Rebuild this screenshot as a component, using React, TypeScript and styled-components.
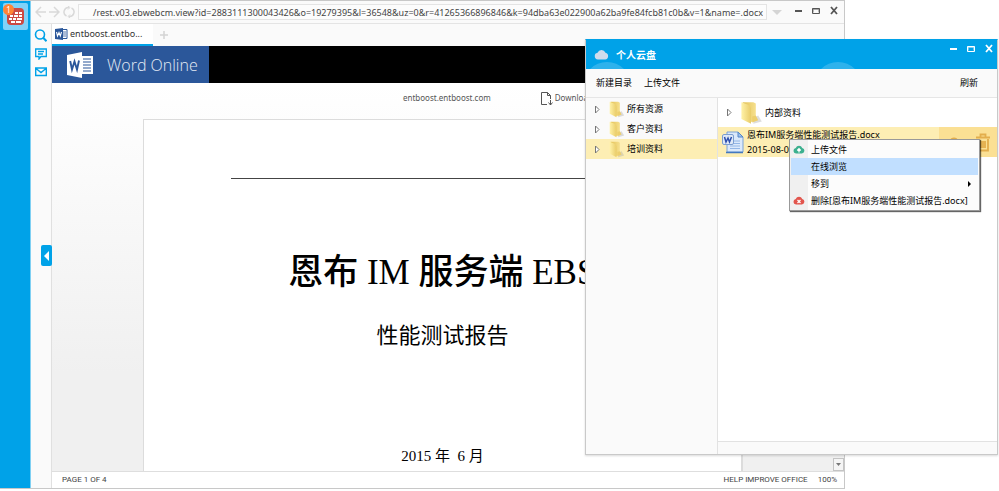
import React from "react";
import styled, { createGlobalStyle } from "styled-components";

const BLUE = "#00a2e8";
const UI = '"Noto Sans", "Noto Sans CJK SC", sans-serif';

const GlobalStyle = createGlobalStyle`
  * { box-sizing: border-box; }
  body { margin: 0; background: #fff; overflow: hidden; }
  button, input { font: inherit; color: inherit; border: 0; padding: 0; background: none; }
  svg { display: block; flex: none; }
`;

const Desktop = styled.main`
  position: relative;
  height: 100vh;
  padding: 0 154px 2px 0;
  font: 9px/12px ${UI};
  color: #444;
`;

const BrowserWindow = styled.section`
  display: flex;
  height: 100%;
  border: solid #c8c8c8;
  border-width: 1px 1px 1px 0;
  background: #fafafa;
`;

const Dock = styled.nav`
  width: 31px;
  flex: none;
  padding: 2px 0 0 3px;
  background: ${BLUE};
  border-right: 1px solid #7fd0f3;
`;

const DockButton = styled.button`
  display: grid;
  place-items: center;
  width: 25px;
  height: 27px;
  border-radius: 2px;
  background: #80d2f8;
`;

const BrowserBody = styled.div`
  flex: 1;
  min-width: 0;
  display: flex;
  flex-direction: column;
`;

const AddressBar = styled.header`
  display: flex;
  align-items: center;
  height: 23px;
  padding: 0 5px 0 4px;
  border-bottom: 1px solid #e4e4e4;
`;

const NavButtons = styled.div`
  display: flex;
  gap: 3px;
  width: 43px;
  color: #d9d9d9;
`;

const Address = styled.input`
  flex: 1;
  min-width: 0;
  height: 16px;
  padding: 0 3px;
  border: 1px solid #e4e4e4;
  background: #fcfcfc;
  text-align: right;
  color: #444;
`;

const DropButton = styled.button`
  width: 20px;
  display: grid;
  place-items: center;
  color: #d5d5d5;
`;

const WindowControls = styled.div<{ $light?: boolean }>`
  display: flex;
  gap: 8px;
  margin-left: ${(p) => (p.$light ? "auto" : "6px")};
  margin-bottom: ${(p) => (p.$light ? "12px" : "4px")};
  color: ${(p) => (p.$light ? "#fff" : "#555")};
`;

const BelowAddress = styled.div`
  flex: 1;
  min-height: 0;
  display: flex;
`;

const SideTools = styled.aside`
  position: relative;
  width: 21px;
  flex: none;
  display: flex;
  flex-direction: column;
  align-items: flex-end;
  gap: 6px;
  padding: 5px 4px 0 0;
  color: ${BLUE};
  border-right: 1px solid #e0e0e0;
`;

const CollapseButton = styled.button`
  position: absolute;
  right: -1px;
  top: 221px;
  width: 11px;
  height: 21px;
  display: grid;
  place-items: center;
  border-radius: 2px;
  background: ${BLUE};
  color: #fff;
`;

const Content = styled.div`
  flex: 1;
  min-width: 0;
  display: flex;
  flex-direction: column;
`;

const Tabs = styled.div`
  display: flex;
  align-items: center;
  height: 22px;
  color: #d4d4d4;
`;

const Tab = styled.button`
  display: flex;
  align-items: center;
  gap: 2px;
  width: 101px;
  height: 22px;
  padding-left: 3px;
  border-bottom: 2px solid ${BLUE};
  background: #fff;
  color: #333;
`;

const NewTab = styled.button`
  padding-left: 6px;
`;

const WordHeader = styled.header`
  display: flex;
  height: 37px;
  background: #000;
`;

const WordBrand = styled.div`
  display: flex;
  align-items: center;
  gap: 13px;
  width: 157px;
  padding-left: 14px;
  background: #2b579a;
  color: #e4ebf5;
  font: 300 16px/20px "Open Sans", sans-serif;
`;

const DocArea = styled.div`
  flex: 1;
  min-height: 0;
  display: flex;
  flex-direction: column;
  background: linear-gradient(#fff, #f0f0f0 75%);
`;

const DocToolbar = styled.div`
  display: flex;
  align-items: center;
  height: 36px;
  padding: 0 0 6px 351px;
  gap: 49px;
  flex: none;
  font-size: 8px;
  color: #555;
`;

const Download = styled.button`
  display: flex;
  align-items: center;
  gap: 2px;
`;

const DocScroll = styled.div`
  flex: 1;
  min-height: 0;
  display: flex;
  padding-left: 91px;
`;

const Paper = styled.article`
  flex: 1;
  min-width: 0;
  overflow: hidden;
  border: solid #dcdcdc;
  border-width: 1px 2px 0 1px;
  background: #fff;
  color: #000;
  text-align: center;
  white-space: nowrap;
  font-family: "Liberation Serif", "Noto Sans CJK SC", serif;
`;

const PaperRule = styled.hr`
  height: 1px;
  margin: 58px 87px 0;
  border: 0;
  background: #444;
`;

const DocTitle = styled.h1`
  margin: 72px 0 0;
  padding-left: 52px;
  font-size: 35px;
  line-height: 44px;
  font-weight: 500;
`;

const DocSubtitle = styled.h2`
  margin: 25px 0 0;
  font-size: 22px;
  line-height: 32px;
  font-weight: 400;
`;

const DocDate = styled.p`
  margin: 96px 0 0;
  font-size: 15px;
  line-height: 16px;
`;

const ScrollColumn = styled.div`
  display: flex;
  align-items: flex-end;
  justify-content: flex-end;
  width: 101px;
  flex: none;
`;

const ScrollButton = styled.button`
  display: grid;
  place-items: center;
  width: 11px;
  height: 13px;
  border: 1px solid #c4c4c4;
  background: #f5f5f5;
  color: #777;
`;

const StatusBar = styled.footer`
  display: flex;
  align-items: center;
  gap: 10px;
  height: 17px;
  flex: none;
  padding: 0 7px 0 10px;
  border-top: 1px solid #dedede;
  background: #fff;
  font-family: Roboto, sans-serif;
  font-size: 8px;
  color: #444;
`;

const StatusText = styled.span<{ $push?: boolean }>`
  margin-left: ${(p) => (p.$push ? "auto" : 0)};
`;

const CloudWindow = styled.section`
  position: absolute;
  top: 39px;
  right: 1px;
  bottom: 36px;
  width: 413px;
  display: flex;
  flex-direction: column;
  border: 1px solid #c9c9c9;
  border-top-color: ${BLUE};
  background: #fafafa;
  color: #000;
  box-shadow: 0 1px 2px rgba(0, 0, 0, 0.15);
`;

const CloudHeader = styled.header`
  position: relative;
  overflow: hidden;
  display: flex;
  align-items: center;
  gap: 7px;
  height: 29px;
  flex: none;
  padding: 0 3px 0 8px;
  background: ${BLUE};
  color: #fff;
`;

const CloudTitle = styled.h1`
  margin: 0;
  font-size: 10px;
  line-height: 14px;
  font-weight: 700;
`;

const Bubble = styled.i<{ $x: number }>`
  position: absolute;
  left: ${(p) => p.$x}px;
  top: 22px;
  width: 48px;
  height: 48px;
  border-radius: 50%;
  background: rgba(255, 255, 255, 0.18);
`;

const CloudToolbar = styled.div`
  display: flex;
  align-items: center;
  gap: 12px;
  height: 29px;
  flex: none;
  padding: 0 19px 0 10px;
  border-bottom: 1px solid #e6e6e6;
`;

const ToolButton = styled.button<{ $push?: boolean }>`
  margin-left: ${(p) => (p.$push ? "auto" : 0)};
`;

const Panes = styled.div`
  flex: 1;
  min-height: 0;
  display: flex;
`;

const Tree = styled.nav`
  width: 132px;
  flex: none;
  padding-top: 1px;
  border-right: 1px solid #e2e2e2;
`;

const RowLabel = styled.span<{ $gap: number }>`
  display: flex;
  align-items: center;
  gap: ${(p) => p.$gap}px;
`;

const TreeRow = styled.button<{ $active?: boolean }>`
  display: flex;
  align-items: center;
  gap: 7px;
  width: 100%;
  height: 20px;
  padding-left: 8px;
  background: ${(p) => (p.$active ? "#fdeeb4" : "transparent")};
`;

const Files = styled.div`
  flex: 1;
  min-width: 0;
  display: flex;
  flex-direction: column;
  background: #fff;
`;

const FolderRow = styled.button`
  display: flex;
  align-items: center;
  gap: 6px;
  height: 29px;
  padding-left: 8px;
`;

const FileRow = styled.div`
  position: relative;
  display: flex;
  align-items: center;
  gap: 3px;
  height: 30px;
  padding-left: 3px;
  background: #fdeeb4;
`;

const FileInfo = styled.div`
  display: flex;
  flex-direction: column;
  line-height: 15px;
  white-space: nowrap;
`;

const FileActions = styled.div`
  display: flex;
  align-items: center;
  gap: 13px;
  align-self: stretch;
  width: 58px;
  margin-left: auto;
  padding-left: 7px;
  background: #fbe094;
  color: #e3ae4c;
`;

const Menu = styled.div`
  position: absolute;
  left: 71px;
  top: 12px;
  width: 191px;
  padding: 1px;
  border: 1px solid #999;
  background: linear-gradient(90deg, #f0f0f0 18px, #fcfcfc 18px);
  box-shadow: 1px 1px 1px rgba(0, 0, 0, 0.6);
`;

const MenuItem = styled.button<{ $active?: boolean }>`
  display: grid;
  grid-template-columns: 12px 1fr 10px;
  align-items: center;
  gap: 6px;
  width: 100%;
  height: 17px;
  padding-left: 2px;
  text-align: left;
  white-space: nowrap;
  background: ${(p) => (p.$active ? "#c1dfff" : "transparent")};
`;

const FooterStrip = styled.footer`
  height: 13px;
  margin-top: auto;
  border-top: 1px solid #e2e2e2;
  background: #fafafa;
`;

const Triangle = ({ dir, w, h }: { dir: "left" | "down" | "right"; w: number; h: number }) => (
  <svg width={w} height={h} viewBox="0 0 10 10" preserveAspectRatio="none" fill="currentColor">
    <path d={dir === "left" ? "M10 0v10L0 5z" : dir === "right" ? "M0 0v10l10-5z" : "M0 0h10L5 10z"} />
  </svg>
);

const Expander = () => (
  <svg width="7" height="9" viewBox="0 0 7 9" fill="#fff" stroke="#777">
    <path d="M1.500 1v7l3.500-3.500z" />
  </svg>
);

const WindowButtons = ({ light }: { light?: boolean }) => (
  <WindowControls $light={light}>
    <button aria-label="Minimize">
      <svg width="10" height="9" viewBox="0 0 10 9" fill="none" stroke="currentColor" strokeWidth="2"><path d="M2 5h7" /></svg>
    </button>
    <button aria-label="Maximize">
      <svg width="10" height="9" viewBox="0 0 10 9" fill="none" stroke="currentColor">
        <path d="M1.500 2.500h7v5h-7zM1.500 3h7" />
        <path d="M2.500 3.500v3M7.500 3.500v3" opacity=".4" />
      </svg>
    </button>
    <button aria-label="Close">
      <svg width="10" height="9" viewBox="0 0 10 9" fill="none" stroke="currentColor" strokeWidth="1.800"><path d="M2 1l6 7M8 1l-6 7" /></svg>
    </button>
  </WindowControls>
);

const FirewallIcon = () => (
  <svg width="25" height="27" viewBox="0 0 25 27">
    <rect x="4" y="5" width="17" height="17" rx="4" fill="#cc4a43" />
    <path d="M7 12h3v2H7zM11 12h4v2h-4zM16 12h3v2h-3zM6 15h3v2H6zM10 15h3v2h-3zM14 15h5v2h-5zM8 18h4v2H8zM13 18h5v2h-5zM12 9h3v2h-3zM16 9h3v2h-3z" fill="#fff" />
    <circle cx="5.500" cy="6.500" r="5.500" fill="#ff8436" />
    <text x="5.500" y="9.500" textAnchor="middle" fontSize="8" fill="#fff" fontFamily="Noto Sans">1</text>
  </svg>
);

const WordMark = () => (
  <svg width="28" height="28" viewBox="0 0 28 28">
    <path d="M16 5h11v18H16z" fill="#fff" />
    <path d="M17 8h8M17 11h8M17 14h8M17 17h8M17 20h8" stroke="#2b579a" strokeWidth="1.200" />
    <path d="M1 4 16 1v26L1 24z" fill="#fff" />
    <path d="M4.200 10 6 18.500 8.500 10.500 11 18.500l2-9" fill="none" stroke="#2b579a" strokeWidth="1.900" />
  </svg>
);

const WordTabIcon = () => (
  <svg width="13" height="12" viewBox="0 0 13 12">
    <path d="M7.500 1.500h4.500v9H7.500z" fill="#fff" stroke="#2b579a" />
    <path d="M8 4h3M8 6h3M8 8h3" stroke="#2b579a" strokeWidth=".8" />
    <path d="M0 1l8-1v12l-8-1z" fill="#2b579a" />
    <path d="M1.500 4l1 4L4 4.500 5.300 8l1.200-4" fill="none" stroke="#fff" strokeWidth="1.100" />
  </svg>
);

const FolderIcon = ({ size }: { size: number }) => (
  <svg width={size} height={size} viewBox="0 0 20 20">
    <defs>
      <linearGradient id="folderFront" x1="0" x2="1">
        <stop offset="0" stopColor="#fff2a8" />
        <stop offset="1" stopColor="#e9cc69" />
      </linearGradient>
      <linearGradient id="folderBack" x1="0" x2="1">
        <stop offset="0" stopColor="#e3c258" />
        <stop offset="1" stopColor="#f6e08e" />
      </linearGradient>
    </defs>
    <path d="M12 19l7-2-3-5-4 2z" fill="#aaa" opacity=".4" />
    <path d="M3 1h9l2 1v14l-5 2z" fill="url(#folderBack)" />
    <path d="M11 13l3-1 2 4-5 2z" fill="#edcf6c" />
    <path d="M2 1l5 2c2 1 3 2 3 4v12l-8-4z" fill="url(#folderFront)" />
  </svg>
);

const DocIcon = () => (
  <svg width="23" height="24" viewBox="0 0 23 24">
    <path d="M6 2h11l5 5v15H6z" fill="#dbe9fb" stroke="#7ba2d8" />
    <path d="M17 2v5h5z" fill="#9fc1ec" stroke="#5486c8" />
    <path d="M9 11h10M9 13.500h10M9 16h10M9 18.500h10" stroke="#93b6e6" />
    <path d="M5 22.500h17" stroke="#4478bf" strokeWidth="1.500" />
    <rect x="1.500" y="4.500" width="11" height="10" rx="1.500" fill="#dfe9f7" stroke="#7c9ed0" />
    <path d="M3.500 7l1.500 5 2-4 1.500 4L10.500 7" fill="none" stroke="#2d4fae" strokeWidth="1.500" />
  </svg>
);

const Cloud = ({ w, h, color, mark }: { w: number; h: number; color: string; mark?: "up" | "x" }) => (
  <svg width={w} height={h} viewBox="0 0 24 18">
    <path d="M6 17a5.500 5.500 0 0 1-.5-10.900A7 7 0 0 1 18.500 6 5.600 5.600 0 0 1 18 17z" fill={color} />
    {mark === "up" && <path d="M12 15V8M8.500 11 12 7.500l3.500 3.500" stroke="#fff" strokeWidth="2.500" fill="none" />}
    {mark === "x" && <path d="M9 8l6 6M15 8l-6 6" stroke="#fff" strokeWidth="2.500" />}
  </svg>
);

const folders = ["所有资源", "客户资料", "培训资料"];
const url =
  "/rest.v03.ebwebcm.view?id=2883111300043426&o=19279395&l=36548&uz=0&r=41265366896846&k=94dba63e022900a62ba9fe84fcb81c0b&v=1&name=.docx";

export default function App() {
  return (
    <>
      <GlobalStyle />
      <Desktop>
        <BrowserWindow>
          <Dock>
            <DockButton aria-label="Firewall"><FirewallIcon /></DockButton>
          </Dock>
          <BrowserBody>
            <AddressBar>
              <NavButtons>
                <button aria-label="Back">
                  <svg width="11" height="12" viewBox="0 0 11 12" fill="none" stroke="currentColor" strokeWidth="1.500"><path d="M11 6H1M6 1 1 6l5 5" /></svg>
                </button>
                <button aria-label="Forward">
                  <svg width="11" height="12" viewBox="0 0 11 12" fill="none" stroke="currentColor" strokeWidth="1.500"><path d="M0 6h10M5 1l5 5-5 5" /></svg>
                </button>
                <button aria-label="Reload">
                  <svg width="12" height="12" viewBox="0 0 12 12" fill="none" stroke="currentColor" strokeWidth="1.500">
                    <path d="M3.500 10A4.500 4.500 0 0 1 6 1.500M8.500 2A4.500 4.500 0 0 1 6 10.500" />
                    <path d="M5 0l2 1.500L5 3.500M7 8.500l-2 2L7 12" strokeWidth="1" />
                  </svg>
                </button>
              </NavButtons>
              <Address aria-label="Address" defaultValue={url} spellCheck={false} />
              <DropButton aria-label="History"><Triangle dir="down" w={10} h={5} /></DropButton>
              <WindowButtons />
            </AddressBar>
            <BelowAddress>
              <SideTools>
                <button aria-label="Search">
                  <svg width="13" height="13" viewBox="0 0 13 13" fill="none" stroke="currentColor" strokeWidth="1.600"><circle cx="6" cy="5.500" r="4.500" /><path d="M9 8.500l3.500 3.800" strokeWidth="2" /></svg>
                </button>
                <button aria-label="Messages">
                  <svg width="12" height="12" viewBox="0 0 12 12" fill="none" stroke="currentColor" strokeWidth="1.300"><path d="M.7 1h10.600v7.500H6L4 11V8.500H.7zM3 3.500h6M3 6h5" /></svg>
                </button>
                <button aria-label="Mail">
                  <svg width="12" height="12" viewBox="0 0 12 12" fill="none" stroke="currentColor" strokeWidth="1.400"><path d="M.7 2h10.600v7.500H.7zM1 2.500l5 4 5-4" /></svg>
                </button>
                <CollapseButton aria-label="Collapse panel"><Triangle dir="left" w={5} h={10} /></CollapseButton>
              </SideTools>
              <Content>
                <Tabs>
                  <Tab><WordTabIcon />entboost.entbo...</Tab>
                  <NewTab aria-label="New tab">
                    <svg width="10" height="10" viewBox="0 0 10 10" stroke="currentColor" strokeWidth="1.500"><path d="M5 1v8M1 5h8" /></svg>
                  </NewTab>
                </Tabs>
                <WordHeader>
                  <WordBrand><WordMark />Word Online</WordBrand>
                </WordHeader>
                <DocArea>
                  <DocToolbar>
                    <span>entboost.entboost.com</span>
                    <Download>
                      <svg width="13" height="15" viewBox="0 0 13 15" fill="none" stroke="#555"><path d="M7 13.500H1.500v-12h6l3 3V8M7.500 1.500v3h3M10.500 9v5M8.500 11.500l2 2.500 2-2.500" /></svg>
                      Download
                    </Download>
                  </DocToolbar>
                  <DocScroll>
                    <Paper>
                      <PaperRule />
                      <DocTitle>恩布 IM 服务端 EBS 1.8</DocTitle>
                      <DocSubtitle>性能测试报告</DocSubtitle>
                      <DocDate>2015 年&nbsp; 6 月</DocDate>
                    </Paper>
                    <ScrollColumn>
                      <ScrollButton aria-label="Scroll down"><Triangle dir="down" w={5} h={3} /></ScrollButton>
                    </ScrollColumn>
                  </DocScroll>
                </DocArea>
                <StatusBar>
                  <StatusText>PAGE 1 OF 4</StatusText>
                  <StatusText $push>HELP IMPROVE OFFICE</StatusText>
                  <StatusText>100%</StatusText>
                </StatusBar>
              </Content>
            </BelowAddress>
          </BrowserBody>
        </BrowserWindow>

        <CloudWindow>
          <CloudHeader>
            <Bubble $x={-3} />
            <Bubble $x={228} />
            <Cloud w={15} h={11} color="#cfdcec" />
            <CloudTitle>个人云盘</CloudTitle>
            <WindowButtons light />
          </CloudHeader>
          <CloudToolbar>
            <ToolButton>新建目录</ToolButton>
            <ToolButton>上传文件</ToolButton>
            <ToolButton $push>刷新</ToolButton>
          </CloudToolbar>
          <Panes>
            <Tree>
              {folders.map((name, i) => (
                <TreeRow key={name} $active={i === 2}>
                  <Expander />
                  <RowLabel $gap={2}><FolderIcon size={17} />{name}</RowLabel>
                </TreeRow>
              ))}
            </Tree>
            <Files>
              <FolderRow>
                <Expander />
                <RowLabel $gap={2}><FolderIcon size={24} />内部资料</RowLabel>
              </FolderRow>
              <FileRow>
                <DocIcon />
                <FileInfo>
                  <span>恩布IM服务端性能测试报告.docx</span>
                  <span>2015-08-07</span>
                </FileInfo>
                <FileActions>
                  <button aria-label="Share"><Cloud w={16} h={13} color="currentColor" /></button>
                  <button aria-label="Delete">
                    <svg width="16" height="19" viewBox="0 0 16 19" fill="none" stroke="currentColor" strokeWidth="1.800"><path d="M1 4.500h14M5.500 4V1.500h5V4M3 6v11.500h10V6M6 8v7M8 8v7M10 8v7" /></svg>
                  </button>
                </FileActions>
                <Menu role="menu">
                  <MenuItem role="menuitem"><Cloud w={12} h={9} color="#3cb08f" mark="up" />上传文件</MenuItem>
                  <MenuItem role="menuitem" $active><i />在线浏览</MenuItem>
                  <MenuItem role="menuitem"><i />移到<Triangle dir="right" w={3} h={6} /></MenuItem>
                  <MenuItem role="menuitem"><Cloud w={12} h={9} color="#e2554d" mark="x" />删除[恩布IM服务端性能测试报告.docx]</MenuItem>
                </Menu>
              </FileRow>
              <FooterStrip />
            </Files>
          </Panes>
        </CloudWindow>
      </Desktop>
    </>
  );
}
